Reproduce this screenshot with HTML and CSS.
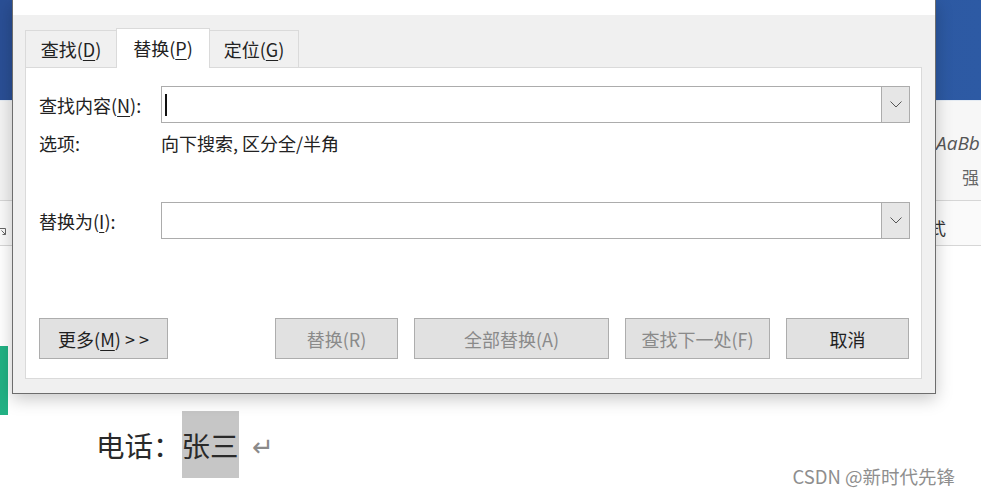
FILE: index.html
```html
<!DOCTYPE html>
<html lang="zh-CN">
<head>
<meta charset="utf-8">
<title>查找和替换</title>
<link rel="stylesheet" href="styles.css">
</head>
<body>
<div class="screen">
  <div class="ribbon-blue"></div>
  <div class="ribbon-gallery">
    <div class="style-tile">
      <span class="style-sample">AaBb</span>
      <span class="style-name">强</span>
    </div>
  </div>
  <div class="ribbon-labels">
    <svg class="launcher" width="8" height="8" viewBox="0 0 8 8"><path d="M0.5 1.5 H6.5 V7.5 M2.5 3.5 L6.5 7.5 M3.5 7.5 H6.5" fill="none" stroke="#666" stroke-width="1"/></svg>
    <span class="group-label">式</span>
  </div>
  <div class="document">
    <p class="doc-line">电话：<span class="sel">张三</span><span class="para-mark">↵</span></p>
  </div>

  <div class="side-tab"></div>
  <div class="watermark">CSDN @新时代先锋</div>

  <div class="dialog">
    <div class="titlebar"></div>
    <div class="dialog-body">
      <div class="tabs">
        <div class="tab tab-1">查找(<u>D</u>)</div>
        <div class="tab tab-active">替换(<u>P</u>)</div>
        <div class="tab tab-3">定位(<u>G</u>)</div>
      </div>
      <div class="panel">
        <div class="field-row row-find">
          <span class="label">查找内容(<u>N</u>):</span>
          <div class="combo">
            <span class="caret"></span>
            <span class="drop"><svg width="12" height="7" viewBox="0 0 12 7"><polyline points="0.5,0.5 6,6 11.5,0.5" fill="none" stroke="#555" stroke-width="1"/></svg></span>
          </div>
        </div>
        <div class="field-row row-options">
          <span class="label">选项:</span>
          <span class="options-text">向下搜索, 区分全/半角</span>
        </div>
        <div class="field-row row-replace">
          <span class="label">替换为(<u>I</u>):</span>
          <div class="combo">
            <span class="drop"><svg width="12" height="7" viewBox="0 0 12 7"><polyline points="0.5,0.5 6,6 11.5,0.5" fill="none" stroke="#555" stroke-width="1"/></svg></span>
          </div>
        </div>
        <div class="button-row">
          <button class="btn btn-more">更多(<u>M</u>) &gt; &gt;</button>
          <div class="btn-group">
            <button class="btn btn-disabled w-replace">替换(R)</button>
            <button class="btn btn-disabled w-all">全部替换(A)</button>
            <button class="btn btn-disabled w-next">查找下一处(F)</button>
            <button class="btn w-cancel">取消</button>
          </div>
        </div>
      </div>
    </div>
  </div>
</div>
</body>
</html>
```

FILE: styles.css
```css
* { box-sizing: border-box; }

html, body {
  margin: 0;
  padding: 0;
  background: #ffffff;
}

body {
  font-family: "Noto Sans CJK SC", "Noto Sans", sans-serif;
}

.screen {
  position: relative;
  width: 981px;
  height: 494px;
  overflow: hidden;
  background: #ffffff;
}

/* ---------- Word window behind ---------- */
.ribbon-blue {
  height: 100px;
  background: linear-gradient(90deg, #2a4f95 0%, #2b559c 60%, #2d5aa4 100%);
}

.ribbon-gallery {
  height: 101px;
  background: #f3f3f3;
  border-top: 1px solid #e4ebf3;
  border-bottom: 1px solid #d6d6d6;
  display: flex;
  justify-content: flex-end;
}

.style-tile {
  width: 46px;
  display: flex;
  flex-direction: column;
  padding-top: 30px;
  background: #f7f7f7;
}

.style-sample {
  font-family: "Open Sans", "Noto Sans", sans-serif;
  font-style: italic;
  font-size: 19px;
  line-height: 24px;
  color: #555;
  white-space: nowrap;
  padding-left: 1px;
}

.style-name {
  font-size: 17px;
  line-height: 22px;
  margin-top: 11px;
  padding-left: 27px;
  color: #666;
  white-space: nowrap;
}

.ribbon-labels {
  height: 45px;
  background: #fafafa;
  border-bottom: 1px solid #d6d6d6;
  display: flex;
  justify-content: space-between;
  align-items: center;
  padding-top: 8px;
}

.launcher {
  margin-left: -1px;
  margin-top: 8px;
}

.group-label {
  font-size: 17px;
  color: #333;
  margin-right: 35px;
}

.document {
  padding-top: 165px;
}

.doc-line {
  margin: 0;
  padding-left: 96px;
  font-size: 28.5px;
  line-height: 67px;
  height: 67px;
  color: #2a2a2a;
  white-space: nowrap;
}

.sel {
  display: inline-block;
  height: 67px;
  background: #c6c6c6;
  vertical-align: top;
}

.para-mark {
  display: inline-block;
  margin-left: 13px;
  font-size: 26px;
  color: #8a8a8a;
  vertical-align: top;
}

.side-tab {
  position: absolute;
  left: 0;
  top: 346px;
  width: 8px;
  height: 69px;
  background: #22b184;
}

.watermark {
  position: absolute;
  right: 26px;
  bottom: 7px;
  font-size: 18.5px;
  line-height: 22px;
  color: #8e8e8e;
  white-space: nowrap;
}

/* ---------- Dialog ---------- */
.dialog {
  position: absolute;
  left: 12px;
  top: 0;
  width: 924px;
  height: 394px;
  border: 1px solid #6d6d6d;
  border-top: none;
  background: #f0f0f0;
  box-shadow: 0 5px 16px rgba(0, 0, 0, 0.22);
  display: flex;
  flex-direction: column;
}

.titlebar {
  height: 15px;
  background: #ffffff;
}

.dialog-body {
  flex: 1;
  padding: 0 13px 14px 12px;
  display: flex;
  flex-direction: column;
}

.tabs {
  height: 53px;
  margin-bottom: -1px;
  display: flex;
  align-items: flex-end;
  font-size: 18px;
  color: #222;
}

.tab {
  height: 37px;
  margin-bottom: 1px;
  border: 1px solid #dadada;
  border-bottom: none;
  background: #f0f0f0;
  display: flex;
  align-items: center;
  justify-content: center;
  white-space: nowrap;
}

.tab u, .label u, .btn u {
  text-decoration-thickness: 1px;
  text-underline-offset: 3px;
}

.tab-1 { width: 91px; border-right: none; }
.tab-3 { width: 89px; border-left: none; }

.tab-active {
  position: relative;
  z-index: 1;
  width: 94px;
  height: 40px;
  margin-bottom: 0;
  background: #ffffff;
  padding-bottom: 2px;
}

.panel {
  height: 312px;
  background: #ffffff;
  border: 1px solid #dadada;
  padding: 18px 11px 0 13px;
  display: flex;
  flex-direction: column;
  font-size: 18px;
  color: #222;
}

.field-row {
  display: flex;
  align-items: center;
}

.label {
  width: 122px;
  flex-shrink: 0;
  white-space: nowrap;
}

.combo {
  flex: 1;
  height: 37px;
  border: 1px solid #acacac;
  background: #ffffff;
  display: flex;
  align-items: center;
  justify-content: space-between;
}

.caret {
  width: 1.5px;
  height: 22px;
  margin-left: 3px;
  background: #111;
}

.drop {
  width: 28px;
  height: 100%;
  margin-left: auto;
  background: #e6e6e6;
  border-left: 1px solid #acacac;
  display: flex;
  align-items: center;
  justify-content: center;
}

.row-options {
  height: 24px;
  margin-top: 8px;
  line-height: 24px;
}

.options-text {
  white-space: nowrap;
}

.row-replace {
  margin-top: 47px;
}

.button-row {
  margin-top: 79px;
  display: flex;
  justify-content: space-between;
  padding-right: 1px;
}

.btn-group {
  display: flex;
  gap: 16px;
}

.btn {
  height: 41px;
  border: 1px solid #adadad;
  background: #e1e1e1;
  font-family: "Noto Sans CJK SC", "Noto Sans", sans-serif;
  font-size: 18px;
  color: #1f1f1f;
  padding: 0;
  white-space: nowrap;
}

.btn-more { width: 129px; }
.btn-disabled { color: #8a8a8a; }
.w-replace { width: 123px; }
.w-all { width: 195px; }
.w-next { width: 145px; }
.w-cancel { width: 123px; }
```
